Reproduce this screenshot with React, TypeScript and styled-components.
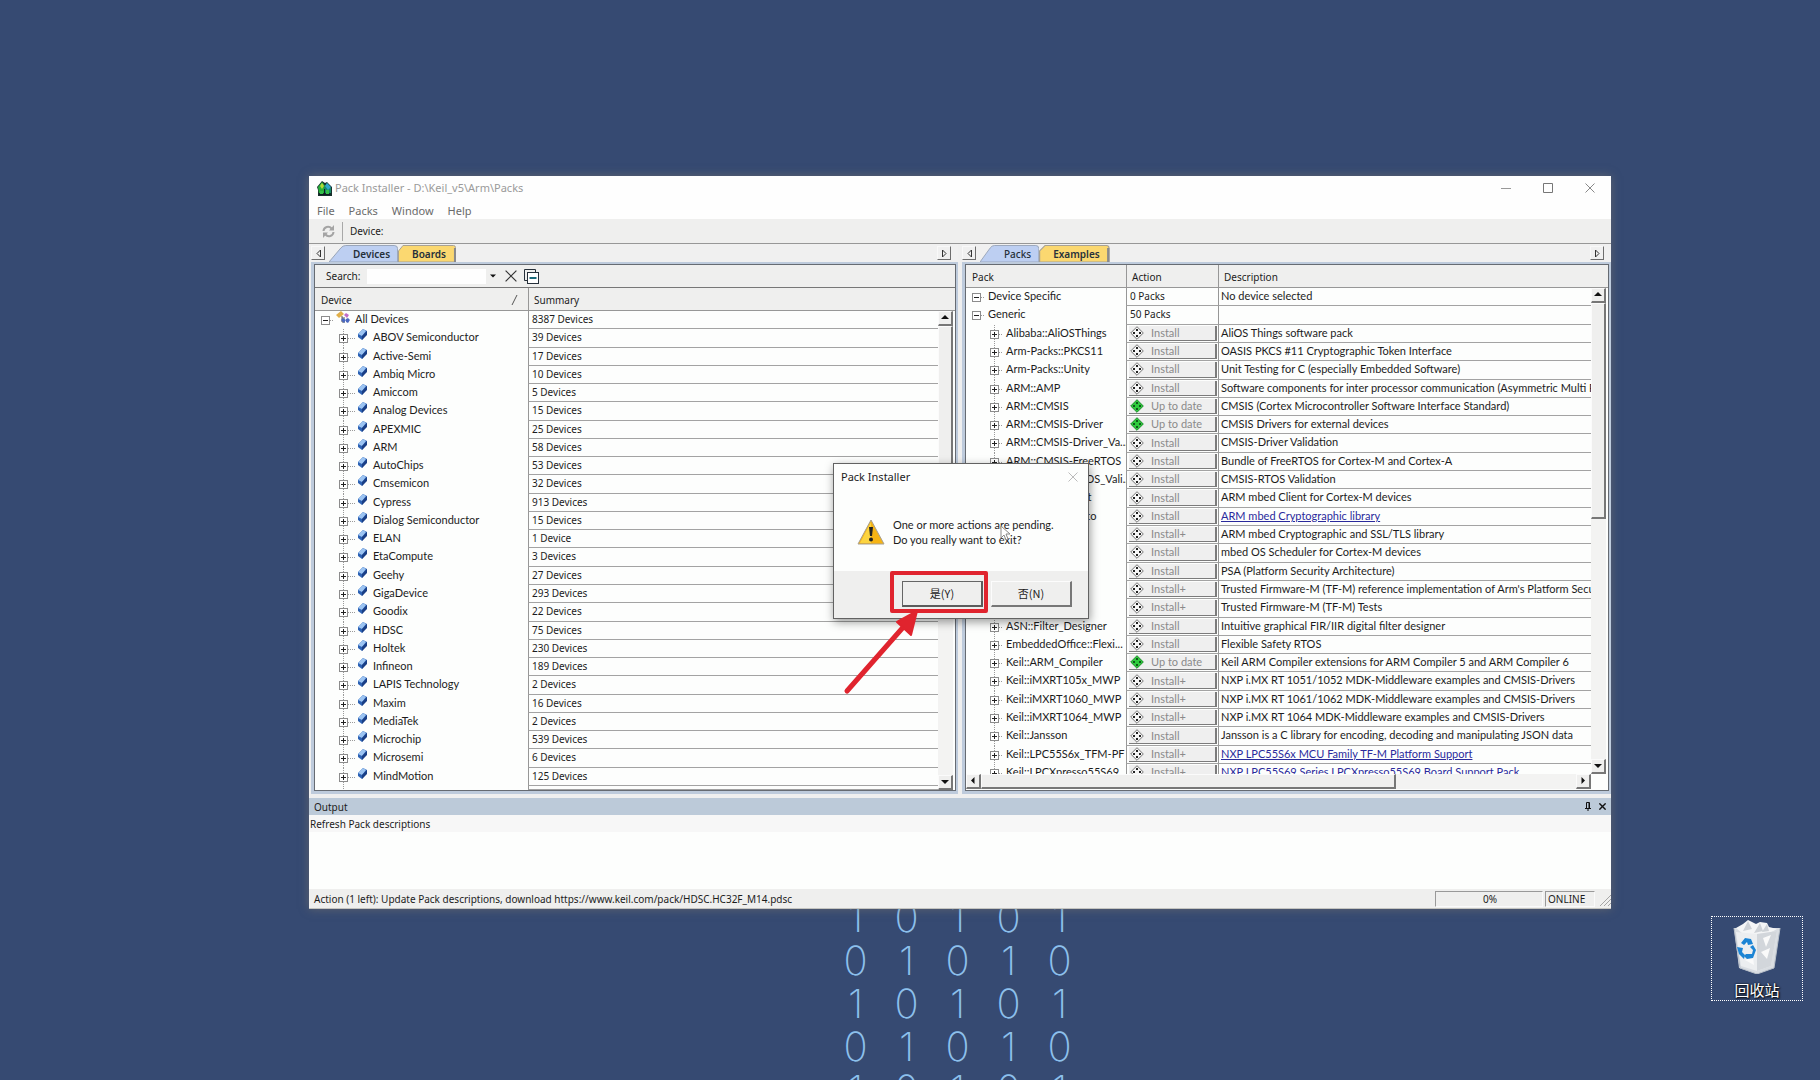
import React from 'react';
import styled, { createGlobalStyle, css } from 'styled-components';

const ui = '"Noto Sans", "Open Sans", "Noto Sans CJK SC", sans-serif';
const list = 'Lato, "Noto Sans", "Noto Sans CJK SC", sans-serif';

const GlobalStyle = createGlobalStyle`
  * { box-sizing: border-box; }
  html, body, #root { height: 100%; }
  body { margin: 0; overflow: hidden; background: #364a72; }
  button, input { font: inherit; color: inherit; padding: 0; margin: 0; border: 0; background: none; border-radius: 0; outline: 0; }
  svg { display: block; flex: none; }
`;

const Desktop = styled.main`
  position: relative;
  height: 100vh;
  overflow: hidden;
  background: #364a72;
  color: #1c1c1c;
  font: 10px/14px ${ui};
`;

/* ---------- wallpaper ---------- */
const Binary = styled.div`
  position: absolute;
  left: 830px;
  top: 896px;
  display: grid;
  grid-template-columns: repeat(5, 51px);
  grid-auto-rows: 43px;
  justify-items: center;
  color: #8dc0ec;
  font: 200 40px/43px Inter, Roboto, sans-serif;
`;

const BinShortcut = styled.button`
  && {
    position: absolute;
    right: 17px;
    top: 916px;
    width: 92px;
    height: 85px;
    border: 1px dotted #fff;
    display: flex;
    flex-direction: column;
    align-items: center;
    justify-content: space-between;
    padding: 3px 0 0;
    color: #fff;
    font: 15px/20px "Noto Sans CJK SC", sans-serif;
    text-shadow: 1px 1px 2px #000, 0 0 2px #000;
  }
`;

/* ---------- main window ---------- */
const Window = styled.section`
  position: absolute;
  left: 309px;
  right: 209px;
  top: 176px;
  bottom: 171px;
  display: flex;
  flex-direction: column;
  background: #efefef;
  box-shadow: 0 0 9px rgba(140, 128, 108, 0.5);
`;

const TitleBar = styled.header`
  display: flex;
  align-items: center;
  height: 24px;
  padding-left: 8px;
  background: #fefefe;
  color: #9a9a9a;
  font-size: 11px;
`;

const Caption = styled.h1`
  flex: 1;
  margin: 0 0 0 3px;
  font: inherit;
`;

const CaptionButton = styled.button`
  display: grid;
  place-items: center;
  width: 42px;
  height: 24px;
`;

const MenuBar = styled.nav`
  display: flex;
  height: 19px;
  gap: 14px;
  padding: 2px 0 0 8px;
  align-items: flex-start;
  background: #fefefe;
  color: #6a6a6a;
  font: 11px/18px ${ui};
`;

const ToolBar = styled.div`
  display: flex;
  align-items: center;
  height: 25px;
  padding: 0 12px;
  border-bottom: 1px solid #979797;
  background: #efefee;
`;

const ToolDivider = styled.span`
  width: 1px;
  height: 19px;
  margin: 0 7px;
  background: #a8a8a8;
`;

const Panes = styled.div`
  flex: 1;
  min-height: 0;
  display: flex;
  gap: 4px;
  padding-left: 2px;
`;

const Pane = styled.section<{ $grow: number }>`
  flex: ${(p) => p.$grow} 1 0;
  min-width: 0;
  display: flex;
  flex-direction: column;
`;

const TabStrip = styled.div`
  display: flex;
  align-items: flex-end;
  height: 18px;
  padding-right: 7px;
  background: #f0f0f0;
`;

const NavButton = styled.button`
  display: grid;
  place-items: center;
  width: 14px;
  height: 14px;
  margin-bottom: 2px;
  && {
    border: 1px solid #6d6d6d;
    border-top-color: #f8f8f8;
    border-left-color: #f8f8f8;
  }
`;

const Spacer = styled.span`
  flex: 1;
`;

const TabButton = styled.button<{ $slant?: boolean; $bold?: boolean }>`
  && {
    position: relative;
    height: 17px;
    margin-left: ${(p) => (p.$slant ? 4 : 0)}px;
    padding: 0 ${(p) => (p.$slant ? 8 : 10)}px 0 ${(p) => (p.$slant ? 24 : 14)}px;
    color: #26303a;
    font-weight: ${(p) => (p.$bold ? 600 : 500)};
  }
  span { position: relative; }
`;

const TabShape = styled.svg`
  position: absolute;
  inset: 0;
  width: 100%;
  height: 100%;
`;

const Frame = styled.div`
  flex: 1;
  min-height: 0;
  display: flex;
  border: solid #becbdc;
  border-width: 2px 2px 3px 3px;
`;

const FrameInner = styled.div`
  flex: 1;
  min-width: 0;
  display: flex;
  flex-direction: column;
  border: 1px solid #666b72;
  background: #fdfefd;
`;

const SearchBar = styled.form`
  display: flex;
  align-items: center;
  height: 23px;
  padding-left: 11px;
  border-bottom: 1px solid #777;
  background: #efefee;
`;

const SearchLabel = styled.label`
  width: 41px;
`;

const SearchInput = styled.input`
  && {
    width: 119px;
    height: 15px;
    background: #fefefe;
  }
`;

const IconButton = styled.button<{ $width: number }>`
  display: grid;
  place-items: center;
  width: ${(p) => p.$width}px;
  height: 16px;
`;

const TableArea = styled.div`
  flex: 1;
  min-height: 0;
  display: flex;
`;

const Table = styled.table<{ $columns: string; $rest: number }>`
  flex: 1;
  min-width: 0;
  display: flex;
  flex-direction: column;
  tr { display: grid; grid-template-columns: ${(p) => p.$columns}; min-height: 0; overflow: hidden; }
  tbody {
    flex: 1;
    min-height: 0;
    display: grid;
    grid-template-rows: repeat(26, minmax(0, 1fr)) ${(p) => p.$rest}px;
  }
  td { padding: 0; }
`;

const HeadCell = styled.th`
  height: 23px;
  display: flex;
  justify-content: space-between;
  padding: 0 9px 0 6px;
  border-bottom: 1px solid #979797;
  background: #efefee;
  font: 10px/24px ${ui};
  & + & { border-left: 1px solid #979797; padding-left: 5px; }
`;

const TreeCell = styled.td<{ $indent: number; $line?: boolean }>`
  display: flex;
  align-items: flex-start;
  min-width: 0;
  overflow: hidden;
  white-space: nowrap;
  && { padding-left: ${(p) => p.$indent}px; }
  background-image: ${(p) => (p.$line ? 'repeating-linear-gradient(to bottom, #9a9a9a 0 1px, transparent 1px 2px)' : 'none')};
  background-size: 1px 100%;
  background-position: ${(p) => p.$indent + 4}px 0;
  background-repeat: no-repeat;
  font: 11px/16px ${list};
`;

const Toggle = styled.button`
  && {
    flex: none;
    width: 9px;
    height: 9px;
    margin-top: 5px;
    background: #fff;
  }
`;

const Twig = styled.span<{ $width: number }>`
  flex: none;
  width: ${(p) => p.$width}px;
  height: 1px;
  margin: 9px 3px 0 0;
  background: repeating-linear-gradient(to right, #9a9a9a 0 1px, transparent 1px 2px);
`;

const NodeIcon = styled.span<{ $width: number }>`
  flex: none;
  width: ${(p) => p.$width}px;
  height: 16px;
`;

const Cell = styled.td<{ $ui?: boolean }>`
  min-width: 0;
  overflow: hidden;
  white-space: nowrap;
  border-left: 1px solid #979797;
  border-bottom: 1px solid #a3a3a3;
  && { padding-left: ${(p) => (p.$ui ? 3 : 2)}px; }
  font: ${(p) => (p.$ui ? `10px/16px ${ui}` : `11px/16px ${list}`)};
  a { color: #2a2a9c; }
`;

const ActionCell = styled.td`
  display: flex;
  border-left: 1px solid #979797;
  border-bottom: 1px solid #a3a3a3;
  && { padding: 1px 1px 1px 2px; }
`;

const ActionButton = styled.button`
  flex: 1;
  display: flex;
  align-items: center;
  gap: 7px;
  && {
    padding-left: 1px;
    border: solid;
    border-width: 0 2px 1px 0;
    border-color: #7b7b7b;
    background: #efefef;
    color: #8a8a8a;
  }
  font: 11px/14px ${list};
`;

const ScrollColumn = styled.div`
  width: 17px;
  display: flex;
  flex-direction: column;
`;

const ScrollHead = styled.div`
  height: 23px;
  border-bottom: 1px solid #979797;
  background: #efefee;
`;

const VTrack = styled.div`
  flex: 1;
  display: flex;
  flex-direction: column;
  margin-right: 2px;
  background: #f3f3f2;
`;

const bevel = css`
  && {
    border: solid;
    border-width: 1px 2px 2px 1px;
    border-color: #fbfbfb #777 #777 #fbfbfb;
    background: #efefee;
  }
`;

const ScrollButton = styled.button`
  ${bevel}
  display: grid;
  place-items: center;
  width: 15px;
  height: 15px;
  flex: none;
`;

const VThumb = styled.div<{ $share: number }>`
  ${bevel}
  flex: ${(p) => p.$share} 1 0;
`;

const HThumb = styled.div`
  ${bevel}
  flex: 71 1 0;
`;

const Rest = styled.div<{ $share: number }>`
  flex: ${(p) => p.$share} 1 0;
`;

const HTrack = styled.div`
  display: flex;
  height: 15px;
  margin: 0 17px 1px 0;
  background: #f3f3f2;
`;

const OutputBar = styled.header`
  display: flex;
  align-items: center;
  height: 17px;
  margin-top: 4px;
  padding: 0 2px 0 5px;
  background: #bccad9;
`;

const OutputTitle = styled.h2`
  flex: 1;
  margin: 0;
  font: inherit;
`;

const OutputBody = styled.div`
  height: 74px;
  background: #fdfefd;
`;

const OutputLine = styled.p`
  margin: 0;
  padding: 1px 0 0 1px;
  background: #f7f7f7;
  line-height: 16px;
`;

const StatusBar = styled.footer`
  display: flex;
  align-items: center;
  height: 20px;
  gap: 2px;
  padding: 1px 0 0 5px;
  border-bottom: 1px solid #c4c4c0;
  background: #efefee;
`;

const StatusText = styled.span`
  flex: 1;
`;

const StatusBox = styled.span<{ $width: number; $center?: boolean }>`
  width: ${(p) => p.$width}px;
  height: 16px;
  padding-left: 2px;
  border: 1px solid #fafafa;
  border-top-color: #999;
  border-left-color: #999;
  text-align: ${(p) => (p.$center ? 'center' : 'left')};
`;

/* ---------- dialog ---------- */
const Dialog = styled.section`
  position: absolute;
  left: 833px;
  top: 463px;
  width: 256px;
  border: 1px solid #626262;
  background: #fdfefd;
  box-shadow: 1px 3px 9px rgba(0, 0, 0, 0.4);
  font: 11px/15px ${list};
`;

const DialogTitle = styled.header`
  display: flex;
  justify-content: space-between;
  height: 22px;
  padding: 5px 10px 0 7px;
  font: 11px/16px ${ui};
`;

const DialogBody = styled.div`
  display: flex;
  gap: 8px;
  align-items: center;
  height: 85px;
  padding: 6px 0 0 23px;
  p { margin: 0; white-space: pre-line; }
`;

const DialogFooter = styled.footer`
  display: flex;
  justify-content: flex-end;
  gap: 8px;
  height: 47px;
  padding: 10px 16px 11px;
  background: #efefee;
`;

const DialogButton = styled.button<{ $default?: boolean }>`
  && {
    width: 81px;
    padding-bottom: 2px;
    border: solid;
    border-width: 1px 2px 2px 1px;
    border-color: ${(p) => (p.$default ? '#666 #5c5c5c #5c5c5c #666' : '#fcfcfc #777 #777 #fcfcfc')};
    background: #efefee;
  }
  font: 11px/14px "Noto Sans CJK SC", sans-serif;
`;

const Highlight = styled.div`
  position: absolute;
  left: 890px;
  top: 571px;
  width: 98px;
  height: 42px;
  border: 4px solid #e0242e;
  border-radius: 2px;
`;

const Overlay = styled.svg<{ $x: number; $y: number }>`
  position: absolute;
  left: ${(p) => p.$x}px;
  top: ${(p) => p.$y}px;
  pointer-events: none;
`;

/* ---------- drawings ---------- */
const AppIcon = () => (
  <svg width="15" height="15" viewBox="0 0 15 15">
    <path d="M0 6 5 0l3 2 2-1 5 5v9H1V9z" fill="#17302c" />
    <path d="M1 6 5 1l4 5v6H2z" fill="#28b03a" />
    <path d="m3 5 2-3 2 3-2 3z" fill="#b6d838" />
    <path d="m7 6 3-4 4 5v5H7z" fill="#188a68" />
    <path d="m8 5 2-3 4 4-3 3z" fill="#2fa6cc" />
    <path d="M3 10h3v3H3zM9 9h3v4H9z" fill="#34c048" />
    <path d="M7 8h1v6H7zM2 13h11v1H2z" fill="#101c22" />
  </svg>
);

const RefreshIcon = () => (
  <svg width="13" height="13" viewBox="0 0 13 13" fill="none" stroke="#a4a4a4" strokeWidth="2">
    <path d="M1.500 6a4.500 4.500 0 0 1 8-2.500" />
    <path d="M11.500 7a4.500 4.500 0 0 1-8 2.500" />
    <path d="M12 0v5.500H7zM1 13V7.500h5z" fill="#a4a4a4" stroke="none" />
  </svg>
);

const Cross = ({ size, color, width = 1 }: { size: number; color: string; width?: number }) => (
  <svg width={size} height={size} viewBox="0 0 10 10" stroke={color} strokeWidth={width}>
    <path d="m.5.5 9 9m0-9-9 9" />
  </svg>
);

const CollapseIcon = () => (
  <svg width="15" height="15" viewBox="0 0 15 15" fill="none" stroke="#26303a">
    <path d="M3.500 11.500h-3V.5h11v3" />
    <rect x="3.500" y="3.500" width="11" height="11" fill="#fff" />
    <path d="M5.500 9h7" stroke="#1a6a7a" strokeWidth="2" />
  </svg>
);

const PinIcon = () => (
  <svg width="8" height="9" viewBox="0 0 8 9" fill="none" stroke="#111">
    <path d="M2.500 6V.5h3V6M5 1v5M1 6.500h6M4 7v2" />
  </svg>
);

const NavArrow = ({ right }: { right?: boolean }) => (
  <svg width="5" height="9" viewBox="0 0 5 9" fill="none" stroke="#333">
    <path d={right ? 'M.5 1v7L4 4.500z' : 'M4.500 1v7L1 4.500z'} />
  </svg>
);

const arrows = {
  up: 'M0 5h8L4 1z',
  down: 'M0 2h8L4 6z',
  left: 'M5.500 0v7L2 3.500z',
  right: 'M2.500 0v7L6 3.500z',
};
const Arrow = ({ dir, size = 8 }: { dir: keyof typeof arrows; size?: number }) => (
  <svg width={size} height={size} viewBox="0 0 8 8"><path d={arrows[dir]} fill="#111" /></svg>
);

const ToggleBox = ({ open }: { open?: boolean }) => (
  <svg width="9" height="9" viewBox="0 0 9 9" fill="#fff">
    <rect x=".5" y=".5" width="8" height="8" stroke="#8c8c8c" />
    <path d={open ? 'M2 4.500h5' : 'M2 4.500h5M4.500 2v5'} stroke="#222" />
  </svg>
);

const ChipIcon = () => (
  <svg width="9" height="11" viewBox="0 0 9 11">
    <path d="m0 5 5-5 4 2v3L4 11 0 8z" fill="#2c62b4" />
    <path d="m0 5 5-5 3 2-4 5z" fill="#9cc4f2" />
    <path d="m4 7 5-5v4l-5 5z" fill="#1a3f86" />
  </svg>
);

const FamilyIcon = () => (
  <svg width="14" height="14" viewBox="0 0 14 14">
    <path d="m0 4 5-4 3 3-5 4z" fill="#e2b04a" />
    <path d="M6 5v6h3M6 7h3" fill="none" stroke="#555" />
    <path d="m8 4 2-2 3 2-2 3z" fill="#c06cc8" />
    <path d="m5 9 2-2 3 2-2 3zM10 8l2-1 2 2-2 3-2-1z" fill="#4a68c0" />
  </svg>
);

const PackIcon = ({ green }: { green?: boolean }) => (
  <svg width="14" height="14" viewBox="0 0 14 14">
    <path d="m7 .7 6.300 6.300L7 13.300.7 7z" fill={green ? '#2ecb3c' : '#f6f6f6'} stroke={green ? '#1c8a2a' : '#777'} />
    <path d="M6 3h2v2H6zM6 9h2v2H6zM3 6h2v2H3zM9 6h2v2H9z" fill={green ? '#0e5a1a' : '#222'} />
  </svg>
);

const SlantShape = () => (
  <TabShape viewBox="0 0 70 17" preserveAspectRatio="none">
    <path d="M0 17 12 3q2-2.500 5-2.500h49q3.500 0 3.500 3V17z" fill="#bdcff2" stroke="#98a4b8" />
  </TabShape>
);

const BlockShape = () => (
  <TabShape viewBox="0 0 58 17" preserveAspectRatio="none">
    <path d="M.5 17V6L5 .5h50.500q2 0 2 2V17z" fill="#fbd870" stroke="#a8a294" />
    <path d="M57 3v14" stroke="#8a8a8c" strokeWidth="2" />
  </TabShape>
);

const Warning = () => (
  <svg width="28" height="26" viewBox="0 0 28 26">
    <path d="M14 1 27 25H1z" fill="#f6b414" stroke="#a8a090" strokeLinejoin="round" />
    <path d="M14 3v21H3z" fill="#fcd440" />
    <path d="M12 8h4l-1 9h-2z" fill="#222" />
    <circle cx="14" cy="20.500" r="2" fill="#222" />
  </svg>
);

const BinIcon = () => (
  <svg width="48" height="54" viewBox="0 0 48 54">
    <path d="m1 8 46 0-6 40-17 6-18-6z" fill="#d9dde2" />
    <path d="m3 8 7-4 5-4 8 4 4-2 7 1 2 4 8 2-9 5H10z" fill="#f4f5f6" />
    <path d="m15 1 4 8-9 2zM27 3l3 8-9 2zM34 4l2 7-7 1z" fill="#cdd1d6" />
    <path d="m3 12 21 2 20-3-6 35-14 5-16-5z" fill="#eceef0" />
    <path d="m24 14 20-3-6 35-14 5z" fill="#d2d6db" />
    <path d="m30 18 8-3-5 12zM28 32l9-4-3 11zM10 18l9 2-6 4zM12 40l8-3 1 8z" fill="#fafafa" />
    <path d="m1 8 6 40 17 6 17-6 6-40" fill="none" stroke="#b9c0c9" />
    <g fill="#1c84d4">
      <path d="m8 23 4-5 6 1 2 5-5 1-1-3-3 3z" />
      <path d="m4 27 6 1-1 4 3 3-1 4-5-5z" />
      <path d="m13 34 6 0 1-4-3-3 3-2 3 5-3 8-6 1-3-3z" />
    </g>
  </svg>
);

/* ---------- data ---------- */
const devices: [string, string][] = [
  ['All Devices', '8387 Devices'], ['ABOV Semiconductor', '39 Devices'], ['Active-Semi', '17 Devices'],
  ['Ambiq Micro', '10 Devices'], ['Amiccom', '5 Devices'], ['Analog Devices', '15 Devices'],
  ['APEXMIC', '25 Devices'], ['ARM', '58 Devices'], ['AutoChips', '53 Devices'], ['Cmsemicon', '32 Devices'],
  ['Cypress', '913 Devices'], ['Dialog Semiconductor', '15 Devices'], ['ELAN', '1 Device'],
  ['EtaCompute', '3 Devices'], ['Geehy', '27 Devices'], ['GigaDevice', '293 Devices'], ['Goodix', '22 Devices'],
  ['HDSC', '75 Devices'], ['Holtek', '230 Devices'], ['Infineon', '189 Devices'], ['LAPIS Technology', '2 Devices'],
  ['Maxim', '16 Devices'], ['MediaTek', '2 Devices'], ['Microchip', '539 Devices'], ['Microsemi', '6 Devices'],
  ['MindMotion', '125 Devices'],
];

const U = 'Up to date';
const I = 'Install';
const P = 'Install+';
const packs: [string, string, string, boolean?][] = [
  ['Alibaba::AliOSThings', I, 'AliOS Things software pack'],
  ['Arm-Packs::PKCS11', I, 'OASIS PKCS #11 Cryptographic Token Interface'],
  ['Arm-Packs::Unity', I, 'Unit Testing for C (especially Embedded Software)'],
  ['ARM::AMP', I, 'Software components for inter processor communication (Asymmetric Multi Processing)'],
  ['ARM::CMSIS', U, 'CMSIS (Cortex Microcontroller Software Interface Standard)'],
  ['ARM::CMSIS-Driver', U, 'CMSIS Drivers for external devices'],
  ['ARM::CMSIS-Driver_Va...', I, 'CMSIS-Driver Validation'],
  ['ARM::CMSIS-FreeRTOS', I, 'Bundle of FreeRTOS for Cortex-M and Cortex-A'],
  ['ARM::CMSIS-RTOS_Vali...', I, 'CMSIS-RTOS Validation'],
  ['ARM::mbedClient', I, 'ARM mbed Client for Cortex-M devices'],
  ['ARM::mbedCrypto', I, 'ARM mbed Cryptographic library', true],
  ['ARM::mbedTLS', P, 'ARM mbed Cryptographic and SSL/TLS library'],
  ['ARM::minar', I, 'mbed OS Scheduler for Cortex-M devices'],
  ['ARM::PSA', I, 'PSA (Platform Security Architecture)'],
  ['ARM::TFM', P, "Trusted Firmware-M (TF-M) reference implementation of Arm's Platform Security Architecture"],
  ['ARM::TFM-Test', P, 'Trusted Firmware-M (TF-M) Tests'],
  ['ASN::Filter_Designer', I, 'Intuitive graphical FIR/IIR digital filter designer'],
  ['EmbeddedOffice::Flexi...', I, 'Flexible Safety RTOS'],
  ['Keil::ARM_Compiler', U, 'Keil ARM Compiler extensions for ARM Compiler 5 and ARM Compiler 6'],
  ['Keil::iMXRT105x_MWP', P, 'NXP i.MX RT 1051/1052 MDK-Middleware examples and CMSIS-Drivers'],
  ['Keil::iMXRT1060_MWP', P, 'NXP i.MX RT 1061/1062 MDK-Middleware examples and CMSIS-Drivers'],
  ['Keil::iMXRT1064_MWP', P, 'NXP i.MX RT 1064 MDK-Middleware examples and CMSIS-Drivers'],
  ['Keil::Jansson', I, 'Jansson is a C library for encoding, decoding and manipulating JSON data'],
  ['Keil::LPC55S6x_TFM-PF', P, 'NXP LPC55S6x MCU Family TF-M Platform Support', true],
  ['Keil::LPCXpresso55S69', P, 'NXP LPC55S69 Series LPCXpresso55S69 Board Support Pack', true],
];

const digits = ['10101', '01010', '10101', '01010', '10101'].join('').split('');

const Scroll = ({ thumb, rest }: { thumb: number; rest: number }) => (
  <ScrollColumn>
    <ScrollHead />
    <VTrack>
      <ScrollButton aria-label="Scroll up"><Arrow dir="up" /></ScrollButton>
      <VThumb $share={thumb} />
      <Rest $share={rest} />
      <ScrollButton aria-label="Scroll down"><Arrow dir="down" /></ScrollButton>
    </VTrack>
  </ScrollColumn>
);

const DevicesPane = () => (
  <Pane $grow={647}>
    <TabStrip>
      <NavButton aria-label="Previous tab"><NavArrow /></NavButton>
      <TabButton $slant $bold><SlantShape /><span>Devices</span></TabButton>
      <TabButton $bold><BlockShape /><span>Boards</span></TabButton>
      <Spacer />
      <NavButton aria-label="Next tab"><NavArrow right /></NavButton>
    </TabStrip>
    <Frame>
      <FrameInner>
        <SearchBar onSubmit={(e) => e.preventDefault()}>
          <SearchLabel htmlFor="search">Search:</SearchLabel>
          <SearchInput id="search" />
          <IconButton type="button" $width={13} aria-label="Search history"><Arrow dir="down" size={6} /></IconButton>
          <IconButton type="button" $width={24} aria-label="Clear"><Cross size={12} color="#333" /></IconButton>
          <IconButton type="button" $width={17} aria-label="Collapse all"><CollapseIcon /></IconButton>
        </SearchBar>
        <TableArea>
          <Table $columns="213px minmax(0, 1fr)" $rest={4}>
            <thead>
              <tr>
                <HeadCell>Device
                  <svg width="8" height="22" viewBox="0 0 8 22"><path d="M1 17 6 7" stroke="#555" /></svg>
                </HeadCell>
                <HeadCell>Summary</HeadCell>
              </tr>
            </thead>
            <tbody>
              {devices.map(([name, count], i) => (
                <tr key={name}>
                  <TreeCell $indent={i ? 24 : 6} $line={i > 0}>
                    <Toggle aria-label={`Toggle ${name}`}><ToggleBox open={!i} /></Toggle>
                    <Twig $width={i ? 7 : 3} />
                    <NodeIcon $width={i ? 15 : 19}>{i ? <ChipIcon /> : <FamilyIcon />}</NodeIcon>
                    {name}
                  </TreeCell>
                  <Cell $ui>{count}</Cell>
                </tr>
              ))}
              <tr>
                <TreeCell $indent={24} $line />
                <Cell />
              </tr>
            </tbody>
          </Table>
          <Scroll thumb={40} rest={60} />
        </TableArea>
      </FrameInner>
    </Frame>
  </Pane>
);

const PacksPane = () => (
  <Pane $grow={649}>
    <TabStrip>
      <NavButton aria-label="Previous tab"><NavArrow /></NavButton>
      <TabButton $slant><SlantShape /><span>Packs</span></TabButton>
      <TabButton $bold><BlockShape /><span>Examples</span></TabButton>
      <Spacer />
      <NavButton aria-label="Next tab"><NavArrow right /></NavButton>
    </TabStrip>
    <Frame>
      <FrameInner>
        <TableArea>
          <Table $columns="160px 92px minmax(0, 1fr)" $rest={10}>
            <thead>
              <tr>
                <HeadCell>Pack</HeadCell>
                <HeadCell>Action</HeadCell>
                <HeadCell>Description</HeadCell>
              </tr>
            </thead>
            <tbody>
              {[['Device Specific', '0 Packs', 'No device selected'], ['Generic', '50 Packs', '']].map(([name, count, text]) => (
                <tr key={name}>
                  <TreeCell $indent={6}>
                    <Toggle aria-label={`Toggle ${name}`}><ToggleBox open /></Toggle>
                    <Twig $width={4} />
                    {name}
                  </TreeCell>
                  <Cell $ui>{count}</Cell>
                  <Cell>{text}</Cell>
                </tr>
              ))}
              {packs.map(([name, action, text, link]) => (
                <tr key={name}>
                  <TreeCell $indent={24} $line>
                    <Toggle aria-label={`Toggle ${name}`}><ToggleBox /></Toggle>
                    <Twig $width={4} />
                    {name}
                  </TreeCell>
                  <ActionCell>
                    <ActionButton><PackIcon green={action === U} />{action}</ActionButton>
                  </ActionCell>
                  <Cell>{link ? <a href="#pack">{text}</a> : text}</Cell>
                </tr>
              ))}
            </tbody>
          </Table>
          <Scroll thumb={47} rest={53} />
        </TableArea>
        <HTrack>
          <ScrollButton aria-label="Scroll left"><Arrow dir="left" /></ScrollButton>
          <HThumb />
          <Rest $share={31} />
          <ScrollButton aria-label="Scroll right"><Arrow dir="right" /></ScrollButton>
        </HTrack>
      </FrameInner>
    </Frame>
  </Pane>
);

export default function App() {
  return (
    <Desktop>
      <GlobalStyle />
      <Binary aria-hidden="true">{digits.map((d, i) => <span key={i}>{d}</span>)}</Binary>
      <BinShortcut><BinIcon />回收站</BinShortcut>

      <Window>
        <TitleBar>
          <AppIcon />
          <Caption>Pack Installer - D:\Keil_v5\Arm\Packs</Caption>
          <CaptionButton aria-label="Minimize"><svg width="10" height="10" viewBox="0 0 10 10"><path d="M0 5.500h10" stroke="#999" /></svg></CaptionButton>
          <CaptionButton aria-label="Maximize"><svg width="10" height="10" viewBox="0 0 10 10"><path d="M.5.5h9v9h-9z" fill="none" stroke="#777" /></svg></CaptionButton>
          <CaptionButton aria-label="Close"><Cross size={10} color="#888" /></CaptionButton>
        </TitleBar>
        <MenuBar>
          <button>File</button>
          <button>Packs</button>
          <button>Window</button>
          <button>Help</button>
        </MenuBar>
        <ToolBar>
          <IconButton $width={14} aria-label="Refresh"><RefreshIcon /></IconButton>
          <ToolDivider />
          Device:
        </ToolBar>
        <Panes>
          <DevicesPane />
          <PacksPane />
        </Panes>
        <OutputBar>
          <OutputTitle>Output</OutputTitle>
          <IconButton $width={15} aria-label="Pin"><PinIcon /></IconButton>
          <IconButton $width={14} aria-label="Close output"><Cross size={7} color="#111" width={2} /></IconButton>
        </OutputBar>
        <OutputBody><OutputLine>Refresh Pack descriptions</OutputLine></OutputBody>
        <StatusBar>
          <StatusText>Action (1 left): Update Pack descriptions, download https://www.keil.com/pack/HDSC.HC32F_M14.pdsc</StatusText>
          <StatusBox $width={108} $center>0%</StatusBox>
          <StatusBox $width={50}>ONLINE</StatusBox>
          <svg width="14" height="16" viewBox="0 0 14 16" stroke="#a5a5a5"><path d="M3 15 14 4M7 15l7-7M11 15l3-3" /></svg>
        </StatusBar>
      </Window>

      <Dialog role="dialog" aria-label="Pack Installer">
        <DialogTitle>Pack Installer<IconButton $width={10} aria-label="Close dialog"><Cross size={10} color="#bbb" /></IconButton></DialogTitle>
        <DialogBody>
          <Warning />
          <p>{'One or more actions are pending.\nDo you really want to exit?'}</p>
        </DialogBody>
        <DialogFooter>
          <DialogButton $default>是(Y)</DialogButton>
          <DialogButton>否(N)</DialogButton>
        </DialogFooter>
      </Dialog>
      <Highlight />
      <Overlay $x={840} $y={605} width="84" height="92" viewBox="0 0 84 92">
        <path d="M7 86 66 19" stroke="#e0242e" strokeWidth="5" strokeLinecap="round" />
        <path d="M77 6 71 30 57 17z" fill="#e0242e" stroke="#e0242e" strokeWidth="2" strokeLinejoin="round" />
      </Overlay>
      <Overlay $x={1000} $y={525} width="12" height="17" viewBox="0 0 12 17">
        <path d="M1 1v12l3-3 2 5 2-1-2-5h4z" fill="#fff" stroke="#888" />
      </Overlay>
    </Desktop>
  );
}
